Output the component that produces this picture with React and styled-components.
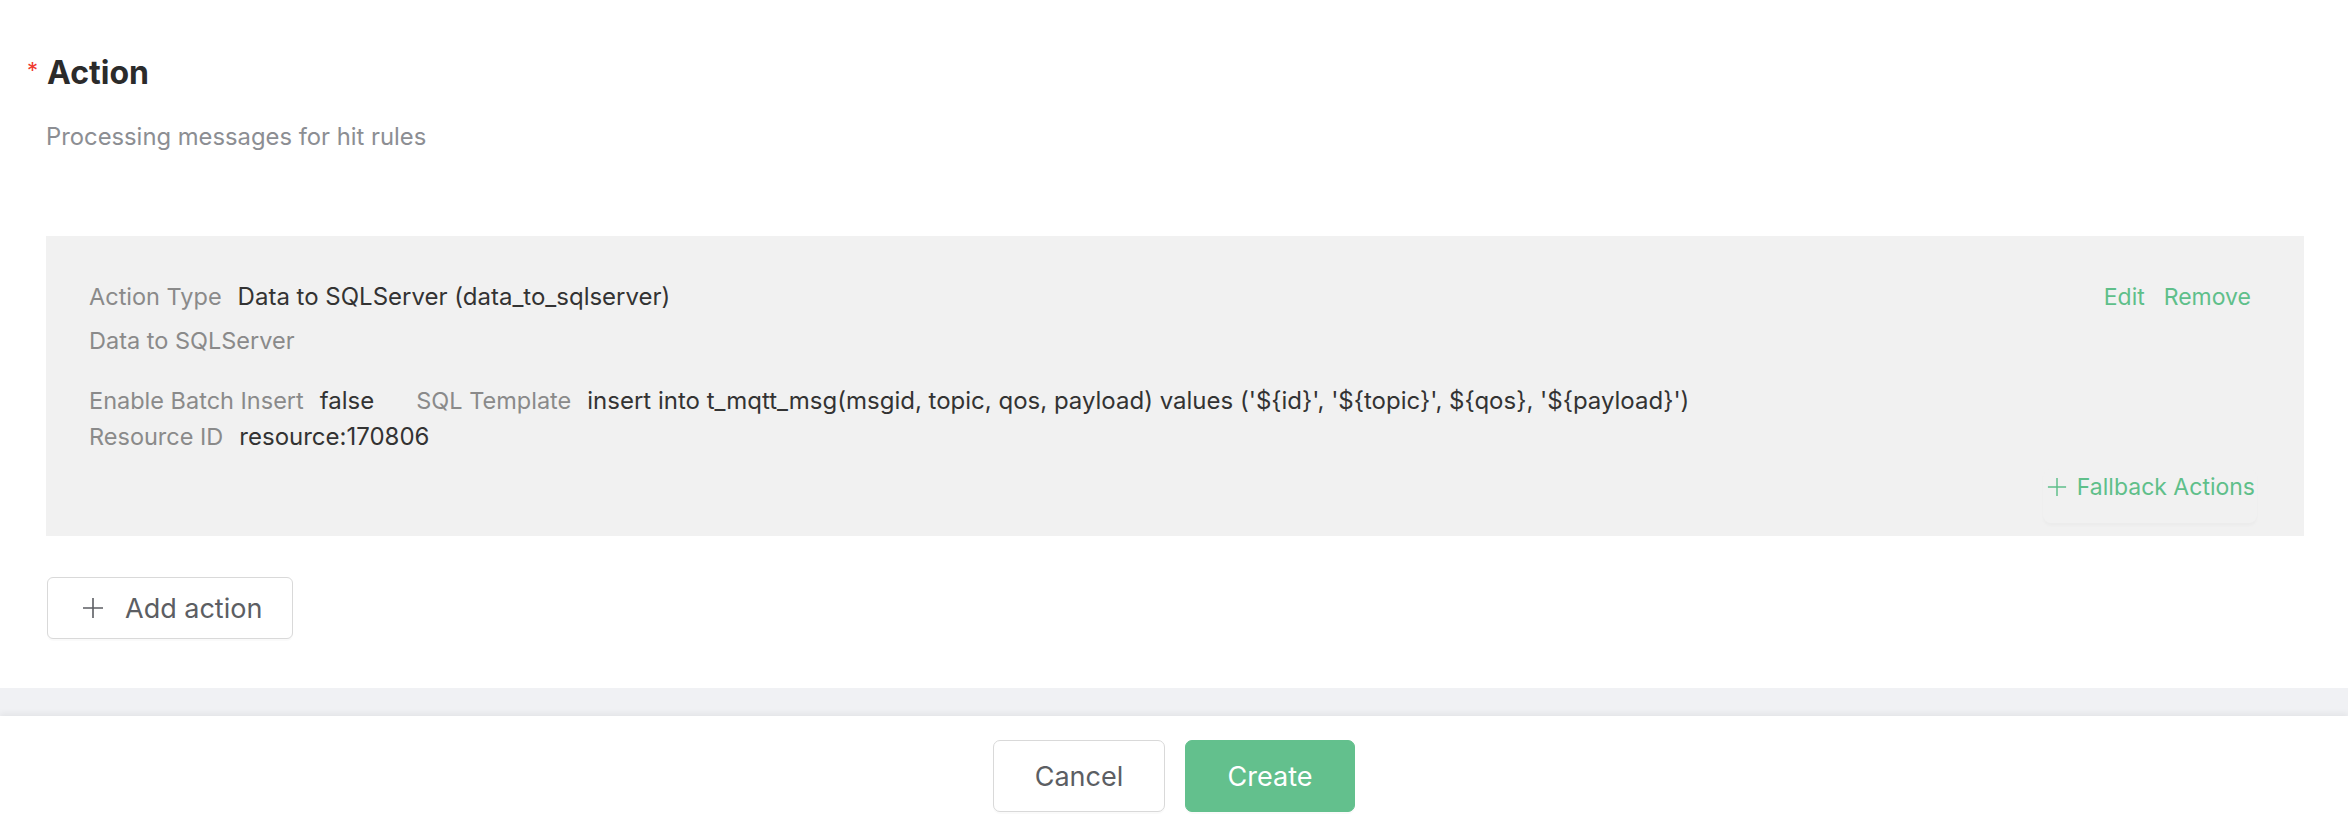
import React from "react";
import styled, { createGlobalStyle } from "styled-components";

const GlobalStyle = createGlobalStyle`
  html, body {
    margin: 0;
    padding: 0;
    background-color: #f0f1f4;
    font-family: Inter, "Noto Sans", "Liberation Sans", sans-serif;
    -webkit-font-smoothing: antialiased;
  }
  * {
    box-sizing: border-box;
  }
`;

const StyledPage = styled.div`
  display: flex;
  flex-direction: column;
  min-height: 820px;
`;

const StyledSection = styled.section`
  padding: 50px 44px 49px 46px;
  background-color: #ffffff;
`;

const StyledTitle = styled.h2`
  display: flex;
  align-items: baseline;
  margin: 0;
  font-size: 32px;
  line-height: 45px;
  font-weight: 700;
  color: #2b2b2b;

  &::before {
    content: "*";
    margin-left: -19px;
    margin-right: 9px;
    font-size: 22px;
    font-weight: 400;
    color: #f0392f;
    position: relative;
    top: -6px;
  }
`;

const StyledDescription = styled.p`
  margin: 23px 0 0;
  font-size: 23.8px;
  line-height: 30px;
  color: #8c8e93;
`;

const StyledCard = styled.div`
  display: flex;
  flex-direction: column;
  margin-top: 84px;
  padding: 43px 47px 13px 43px;
  background-color: #f1f1f1;
  font-size: 23px;
  line-height: 36px;
`;

const StyledRow = styled.div`
  display: flex;
  align-items: center;
  margin-top: ${(props) => props.$gap || 0}px;
`;

const StyledLabel = styled.span`
  margin-right: 16px;
  font-size: 23.5px;
  color: #8a8a8a;
`;

const StyledValue = styled.span`
  margin-right: ${(props) => (props.$last ? 0 : 42)}px;
  font-size: 24px;
  color: #333333;
  white-space: nowrap;
`;

const StyledMuted = styled.span`
  font-size: 23.5px;
  color: #8a8a8a;
`;

const StyledLinks = styled.div`
  display: flex;
  gap: 19px;
  margin-left: auto;
  margin-right: 6px;
`;

const StyledLink = styled.a`
  color: #5fbf8a;
  cursor: pointer;
`;

const StyledFallbackRow = styled.div`
  display: flex;
  justify-content: flex-end;
  margin-top: 14px;
`;

const StyledFallbackButton = styled.button`
  display: flex;
  align-items: flex-start;
  gap: 10px;
  height: 54px;
  padding: 0 2px 0 4px;
  border: none;
  border-radius: 8px;
  background-color: #f1f1f1;
  box-shadow: 0 3px 3px rgba(0, 0, 0, 0.025);
  font-family: inherit;
  font-size: 23px;
  line-height: 36px;
  color: #5fbf8a;
  cursor: pointer;
`;

const StyledPlusIcon = styled.svg`
  flex-shrink: 0;
  width: ${(props) => props.$size}px;
  height: ${(props) => props.$size}px;
  margin-top: ${(props) => props.$offset || 0}px;
`;

const StyledAddButton = styled.button`
  display: flex;
  align-items: center;
  gap: 21px;
  width: 246px;
  height: 62px;
  margin-top: 41px;
  margin-left: 1px;
  padding: 0 0 0 34px;
  border: 1px solid #d9d9d9;
  border-radius: 6px;
  background-color: #ffffff;
  box-shadow: 0 2px 0 rgba(0, 0, 0, 0.02);
  font-family: inherit;
  font-size: 27px;
  color: #5c5e63;
  cursor: pointer;
`;

const StyledFooter = styled.footer`
  display: flex;
  justify-content: center;
  gap: 20px;
  flex: 1;
  margin-top: 28px;
  padding-top: 24px;
  background-color: #ffffff;
  box-shadow: 0 -3px 6px rgba(0, 0, 0, 0.05);
`;

const StyledFooterButton = styled.button`
  width: ${(props) => props.$width}px;
  height: 72px;
  border: 1px solid ${(props) => (props.$primary ? "#63c08d" : "#d9d9d9")};
  border-radius: 7px;
  background-color: ${(props) => (props.$primary ? "#63c08d" : "#ffffff")};
  box-shadow: 0 2px 0 rgba(0, 0, 0, 0.02);
  font-family: inherit;
  font-size: 27px;
  color: ${(props) => (props.$primary ? "#ffffff" : "#5c5e63")};
  cursor: pointer;
`;

function PlusIcon({ size, offset }) {
  return (
    <StyledPlusIcon $size={size} $offset={offset} viewBox="0 0 22 22" fill="none">
      <path d="M11 1v20M1 11h20" stroke="currentColor" strokeWidth="1.6" />
    </StyledPlusIcon>
  );
}

function ActionCard() {
  return (
    <StyledCard>
      <StyledRow>
        <StyledLabel>Action Type</StyledLabel>
        <StyledValue $last>Data to SQLServer (data_to_sqlserver)</StyledValue>
        <StyledLinks>
          <StyledLink>Edit</StyledLink>
          <StyledLink>Remove</StyledLink>
        </StyledLinks>
      </StyledRow>
      <StyledRow $gap={8}>
        <StyledMuted>Data to SQLServer</StyledMuted>
      </StyledRow>
      <StyledRow $gap={24}>
        <StyledLabel>Enable Batch Insert</StyledLabel>
        <StyledValue>false</StyledValue>
        <StyledLabel>SQL Template</StyledLabel>
        <StyledValue $last>
          {"insert into t_mqtt_msg(msgid, topic, qos, payload) values ('${id}', '${topic}', ${qos}, '${payload}')"}
        </StyledValue>
      </StyledRow>
      <StyledRow>
        <StyledLabel>Resource ID</StyledLabel>
        <StyledValue $last>resource:170806</StyledValue>
      </StyledRow>
      <StyledFallbackRow>
        <StyledFallbackButton>
          <PlusIcon size={20} offset={8} />
          Fallback Actions
        </StyledFallbackButton>
      </StyledFallbackRow>
    </StyledCard>
  );
}

export default function App() {
  return (
    <StyledPage>
      <GlobalStyle />
      <StyledSection>
        <StyledTitle>Action</StyledTitle>
        <StyledDescription>Processing messages for hit rules</StyledDescription>
        <ActionCard />
        <StyledAddButton>
          <PlusIcon size={22} />
          Add action
        </StyledAddButton>
      </StyledSection>
      <StyledFooter>
        <StyledFooterButton $width={172}>Cancel</StyledFooterButton>
        <StyledFooterButton $width={170} $primary>
          Create
        </StyledFooterButton>
      </StyledFooter>
    </StyledPage>
  );
}
